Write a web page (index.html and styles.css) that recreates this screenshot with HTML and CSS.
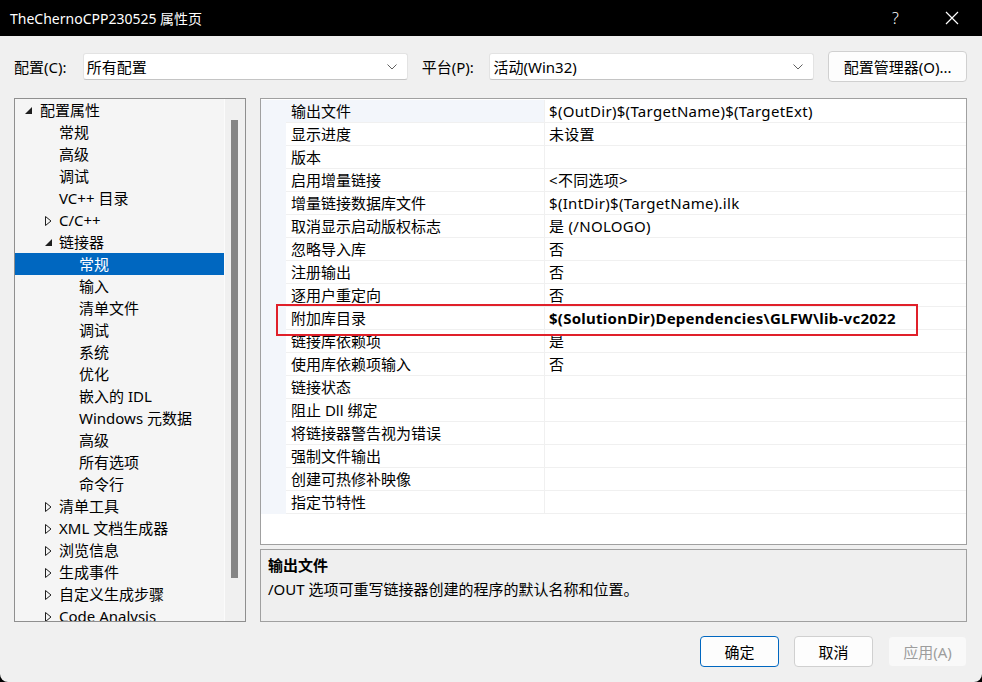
FILE: index.html
```html
<!DOCTYPE html>
<html lang="zh-CN">
<head>
    <meta charset="UTF-8">
    <title>TheChernoCPP230525 属性页</title>
    <link rel="stylesheet" href="styles.css">
</head>
<body>
<div class="window">
    <div class="titlebar">
        <span class="title">TheChernoCPP230525 属性页</span>
        <span class="help">?</span>
        <span class="close">
            <svg width="14" height="14" viewBox="0 0 14 14"><path d="M1 1 L13 13 M13 1 L1 13" stroke="#fff" stroke-width="1.2" fill="none"/></svg>
        </span>
    </div>

    <div class="content">
        <div class="config-row">
            <label class="lbl">配置(C):</label>
            <div class="combo combo-config">
                <span>所有配置</span>
                <svg class="chev" width="10" height="6" viewBox="0 0 10 6"><path d="M0.5 0.5 L5 5 L9.5 0.5" stroke="#606060" fill="none"/></svg>
            </div>
            <label class="lbl lbl-platform">平台(P):</label>
            <div class="combo combo-platform">
                <span>活动(Win32)</span>
                <svg class="chev" width="10" height="6" viewBox="0 0 10 6"><path d="M0.5 0.5 L5 5 L9.5 0.5" stroke="#606060" fill="none"/></svg>
            </div>
            <button class="btn btn-manager">配置管理器(O)...</button>
        </div>

        <div class="main">
            <!-- 左侧树 -->
            <div class="tree">
                <div class="tree-list">
                    <div class="node lv0"><svg class="tri open" width="7" height="7" viewBox="0 0 7 7"><path d="M7 0 L7 7 L0 7 Z" fill="#1e1e1e"/></svg>配置属性</div>
                    <div class="node lv1">常规</div>
                    <div class="node lv1">高级</div>
                    <div class="node lv1">调试</div>
                    <div class="node lv1">VC++ 目录</div>
                    <div class="node lv1"><svg class="tri closed" width="7" height="10" viewBox="0 0 7 10"><path d="M0.5 0.5 L6 5 L0.5 9.5 Z" fill="none" stroke="#1e1e1e"/></svg>C/C++</div>
                    <div class="node lv1"><svg class="tri open" width="7" height="7" viewBox="0 0 7 7"><path d="M7 0 L7 7 L0 7 Z" fill="#1e1e1e"/></svg>链接器</div>
                    <div class="node lv2 selected">常规</div>
                    <div class="node lv2">输入</div>
                    <div class="node lv2">清单文件</div>
                    <div class="node lv2">调试</div>
                    <div class="node lv2">系统</div>
                    <div class="node lv2">优化</div>
                    <div class="node lv2">嵌入的 IDL</div>
                    <div class="node lv2">Windows 元数据</div>
                    <div class="node lv2">高级</div>
                    <div class="node lv2">所有选项</div>
                    <div class="node lv2">命令行</div>
                    <div class="node lv1"><svg class="tri closed" width="7" height="10" viewBox="0 0 7 10"><path d="M0.5 0.5 L6 5 L0.5 9.5 Z" fill="none" stroke="#1e1e1e"/></svg>清单工具</div>
                    <div class="node lv1"><svg class="tri closed" width="7" height="10" viewBox="0 0 7 10"><path d="M0.5 0.5 L6 5 L0.5 9.5 Z" fill="none" stroke="#1e1e1e"/></svg>XML 文档生成器</div>
                    <div class="node lv1"><svg class="tri closed" width="7" height="10" viewBox="0 0 7 10"><path d="M0.5 0.5 L6 5 L0.5 9.5 Z" fill="none" stroke="#1e1e1e"/></svg>浏览信息</div>
                    <div class="node lv1"><svg class="tri closed" width="7" height="10" viewBox="0 0 7 10"><path d="M0.5 0.5 L6 5 L0.5 9.5 Z" fill="none" stroke="#1e1e1e"/></svg>生成事件</div>
                    <div class="node lv1"><svg class="tri closed" width="7" height="10" viewBox="0 0 7 10"><path d="M0.5 0.5 L6 5 L0.5 9.5 Z" fill="none" stroke="#1e1e1e"/></svg>自定义生成步骤</div>
                    <div class="node lv1"><svg class="tri closed" width="7" height="10" viewBox="0 0 7 10"><path d="M0.5 0.5 L6 5 L0.5 9.5 Z" fill="none" stroke="#1e1e1e"/></svg>Code Analysis</div>
                </div>
                <div class="scrollbar"><div class="thumb"></div></div>
            </div>

            <!-- 右侧属性表 -->
            <div class="right">
                <div class="grid">
                    <div class="prop current"><span class="gut"></span><span class="name">输出文件</span><span class="val">$(OutDir)$(TargetName)$(TargetExt)</span></div>
                    <div class="prop"><span class="gut"></span><span class="name">显示进度</span><span class="val">未设置</span></div>
                    <div class="prop"><span class="gut"></span><span class="name">版本</span><span class="val"></span></div>
                    <div class="prop"><span class="gut"></span><span class="name">启用增量链接</span><span class="val">&lt;不同选项&gt;</span></div>
                    <div class="prop"><span class="gut"></span><span class="name">增量链接数据库文件</span><span class="val">$(IntDir)$(TargetName).ilk</span></div>
                    <div class="prop"><span class="gut"></span><span class="name">取消显示启动版权标志</span><span class="val">是 (/NOLOGO)</span></div>
                    <div class="prop"><span class="gut"></span><span class="name">忽略导入库</span><span class="val">否</span></div>
                    <div class="prop"><span class="gut"></span><span class="name">注册输出</span><span class="val">否</span></div>
                    <div class="prop"><span class="gut"></span><span class="name">逐用户重定向</span><span class="val">否</span></div>
                    <div class="prop"><span class="gut"></span><span class="name">附加库目录</span><span class="val bold">$(SolutionDir)Dependencies\GLFW\lib-vc2022</span></div>
                    <div class="prop"><span class="gut"></span><span class="name">链接库依赖项</span><span class="val">是</span></div>
                    <div class="prop"><span class="gut"></span><span class="name">使用库依赖项输入</span><span class="val">否</span></div>
                    <div class="prop"><span class="gut"></span><span class="name">链接状态</span><span class="val"></span></div>
                    <div class="prop"><span class="gut"></span><span class="name">阻止 Dll 绑定</span><span class="val"></span></div>
                    <div class="prop"><span class="gut"></span><span class="name">将链接器警告视为错误</span><span class="val"></span></div>
                    <div class="prop"><span class="gut"></span><span class="name">强制文件输出</span><span class="val"></span></div>
                    <div class="prop"><span class="gut"></span><span class="name">创建可热修补映像</span><span class="val"></span></div>
                    <div class="prop"><span class="gut"></span><span class="name">指定节特性</span><span class="val"></span></div>
                    <div class="mark"></div>
                </div>
                <div class="desc">
                    <div class="desc-title">输出文件</div>
                    <div class="desc-text">/OUT 选项可重写链接器创建的程序的默认名称和位置。</div>
                </div>
            </div>
        </div>

        <div class="footer">
            <button class="btn btn-ok">确定</button>
            <button class="btn">取消</button>
            <button class="btn" disabled>应用(A)</button>
        </div>
    </div>
</div>
</body>
</html>
```

FILE: styles.css
```css
html, body {
    margin: 0;
    padding: 0;
    background: #000;
}
body {
    font-family: "Noto Sans", "Noto Sans CJK SC", sans-serif;
    font-size: 15px;
    color: #000;
}
.window {
    width: 982px;
    height: 682px;
    background: #f0f0f0;
    border-radius: 0 0 8px 8px;
    overflow: hidden;
}
.titlebar {
    height: 36px;
    background: #000;
    color: #fff;
    display: flex;
    align-items: center;
    padding-left: 10px;
}
.title {
    flex: 1;
    font-size: 14px;
}
.help {
    width: 14px;
    font-size: 16px;
    margin-right: 39px;
    font-weight: 300;
}
.close {
    width: 14px;
    height: 14px;
    margin-right: 23px;
    display: flex;
}
.content {
    padding: 15px 15px 0 14px;
}
.config-row {
    height: 31px;
    display: flex;
    align-items: center;
}
.lbl {
    width: 69px;
}
.lbl-platform {
    margin-left: 14px;
    width: 68px;
}
.combo {
    height: 25px;
    background: #fff;
    border: 1px solid #e3e3e3;
    border-bottom-color: #c4c4c4;
    border-radius: 3px;
    display: flex;
    align-items: center;
    padding: 0 10px 0 3px;
    box-sizing: content-box;
}
.combo span {
    flex: 1;
}
.combo-config {
    width: 311px;
}
.combo-platform {
    width: 311px;
}
.chev {
    display: block;
}
.btn {
    font-family: inherit;
    font-size: 15px;
    height: 31px;
    width: 79px;
    background: #fdfdfd;
    border: 1px solid #d0d0d0;
    border-radius: 4px;
    color: #000;
    padding: 0;
}
.btn-manager {
    width: 139px;
    margin-left: 14px;
}
.btn-ok {
    border-color: #0067c0;
}
.btn:disabled {
    background: #f9f9f9;
    border-color: #f0f0f0;
    color: #9d9d9d;
}
.main {
    margin-top: 16px;
    height: 525px;
    display: flex;
    gap: 14px;
}
.tree {
    width: 230px;
    border: 1px solid #8f8f8f;
    background: #f5f5f5;
    display: flex;
    overflow: hidden;
    height: 522px;
}
.tree-list {
    width: 209px;
    overflow: hidden;
    border-right: 1px solid #fbfbfb;
}
.node {
    height: 22px;
    line-height: 22px;
    white-space: nowrap;
    position: relative;
}
.lv0 { padding-left: 25px; }
.lv1 { padding-left: 44px; }
.lv2 { padding-left: 64px; }
.node.selected {
    background: #0067c0;
    color: #fff;
}
.tri {
    position: absolute;
    display: block;
}
.tri.open {
    top: 8px;
}
.tri.closed {
    top: 7px;
}
.lv0 .tri { left: 10px; }
.lv1 .tri { left: 30px; }
.scrollbar {
    width: 20px;
    background: #f0f0f0;
}
.thumb {
    margin: 21px 0 0 6px;
    width: 7px;
    height: 458px;
    background: #858585;
}
.right {
    flex: 1;
    display: flex;
    flex-direction: column;
    gap: 4px;
}
.grid {
    flex-shrink: 0;
    height: 444px;
    background: #fff;
    border: 1px solid #a0a0a0;
    padding-top: 1px;
    position: relative;
    box-sizing: content-box;
}
.prop {
    display: grid;
    grid-template-columns: 25px 258px 1fr;
    height: 23px;
    line-height: 22px;
}
.prop .gut {
    background: #f3f6fb;
}
.prop .name {
    padding-left: 5px;
    border-bottom: 1px solid #f0f0f0;
    white-space: nowrap;
}
.prop .val {
    padding-left: 4px;
    border-left: 1px solid #f0f0f0;
    border-bottom: 1px solid #f0f0f0;
    white-space: nowrap;
    letter-spacing: 0.3px;
}
.prop.current .name {
    background: #f3f6fb;
}
.val.bold {
    font-weight: bold;
    letter-spacing: 0.25px;
}
.mark {
    position: absolute;
    left: 15px;
    top: 205px;
    width: 638px;
    height: 28px;
    border: 2px solid #e0202a;
}
.desc {
    flex-shrink: 0;
    height: 67px;
    border: 1px solid #a0a0a0;
    background: #efefef;
    padding: 4px 7px 0;
    box-sizing: content-box;
}
.desc-title {
    font-weight: bold;
    line-height: 23px;
}
.desc-text {
    line-height: 24px;
}
.footer {
    margin-top: 13px;
    display: flex;
    justify-content: flex-end;
    gap: 15px;
}
```
